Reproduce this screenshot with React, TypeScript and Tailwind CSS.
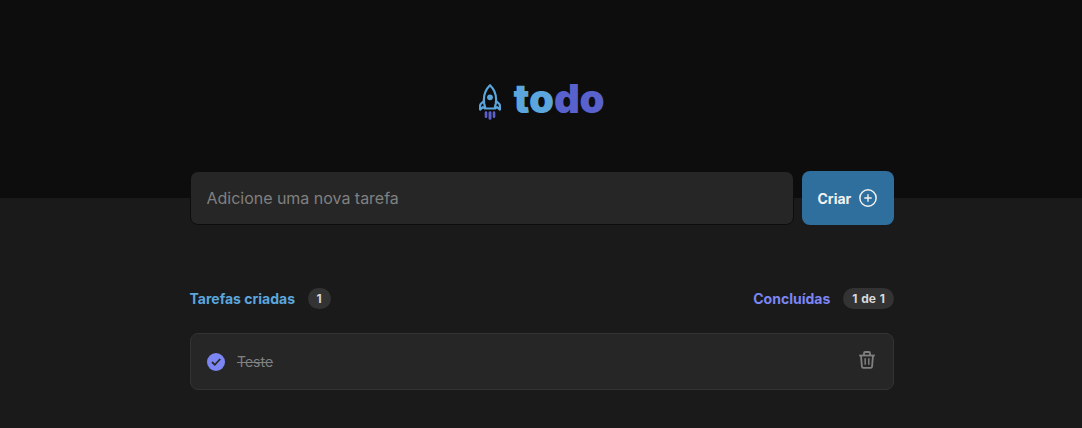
function Rocket() {
  return (
    <svg width="22" height="36" viewBox="0 0 22 36" fill="none" className="shrink-0">
      <g stroke="#5BA6DC" strokeWidth="2.2" strokeLinejoin="round">
        <path d="M6.4 24.5L5.2 19.5C4.2 13 6 6 11 1.2C16 6 17.8 13 16.8 19.5L15.6 24.5Z" />
        <path d="M5 17L1.9 19.8C1.3 20.4 1.1 21 1.1 22V25.6L4 23.2L6.4 24.5" />
        <path d="M17 17L20.1 19.8C20.7 20.4 20.9 21 20.9 22V25.6L18 23.2L15.6 24.5" />
      </g>
      <circle cx="11" cy="13.3" r="2.9" fill="#5BA6DC" />
      <g stroke="#5E60CE" strokeLinecap="round">
        <path d="M7 28.6V32.8M15 28.6V32.8" strokeWidth="2.6" />
        <path d="M11 28.8V34.4" strokeWidth="2.9" />
      </g>
    </svg>
  );
}

function PlusCircle() {
  return (
    <svg width="18" height="18" viewBox="0 0 18 18" fill="none" stroke="#F2F2F2">
      <circle cx="9" cy="9" r="8.15" strokeWidth="1.5" />
      <path d="M9 5.3V12.7M5.3 9H12.7" strokeWidth="1.4" />
    </svg>
  );
}

function CheckBadge() {
  return (
    <svg width="18" height="18" viewBox="0 0 18 18" fill="none">
      <circle cx="9" cy="9" r="9" fill="#7C86F2" />
      <path d="M5 9L7.8 11.8L13.2 6" stroke="#262626" strokeWidth="1.8" />
    </svg>
  );
}

function Trash() {
  return (
    <svg width="16" height="18" viewBox="0 0 16 18" fill="none" stroke="#808080" strokeWidth="1.8">
      <path d="M0.2 4.5H15.8" />
      <path d="M5 4V2.2C5 1.4 5.4 1 6.2 1H9.8C10.6 1 11 1.4 11 2.2V4" />
      <path d="M2 4.5L2.9 15.4C3 16.4 3.5 16.9 4.4 16.9H11.6C12.5 16.9 13 16.4 13.1 15.4L14 4.5" />
      <path d="M6.2 7.2V13.8M9.8 7.2V13.8" strokeWidth="1.5" />
    </svg>
  );
}

export default function App() {
  return (
    <div className="flex h-[428px] flex-col overflow-hidden bg-[#1a1a1a] font-['Inter',sans-serif]">
      <header className="flex h-[198px] shrink-0 justify-center bg-[#0d0d0d] pt-[75px] pl-0.5">
        <h1 className="flex h-12 items-start gap-3 text-[40px] leading-[48px] font-black tracking-[-0.1px]">
          <span className="flex pt-[9px]">
            <Rocket />
          </span>
          <span className="text-[#5ba6dc]">
            to<span className="text-[#5961cc]">do</span>
          </span>
        </h1>
      </header>

      <main className="-mt-[27px] ml-[190px] w-[704px]">
        <form className="flex h-[54px] gap-2" onSubmit={(e) => e.preventDefault()}>
          <input
            aria-label="Nova tarefa"
            placeholder="Adicione uma nova tarefa"
            className="min-w-0 flex-1 rounded-lg border border-[#0d0d0d] bg-[#262626] pr-4 pl-[15.5px] text-base tracking-[-0.02px] text-[#f2f2f2] outline-none placeholder:text-[#808080]"
          />
          <button className="flex w-[92px] items-center gap-[7.5px] rounded-lg bg-[#2f6f9e] pt-px pl-[15.5px] text-sm font-bold text-[#f2f2f2]">
            Criar
            <span className="-mt-px">
              <PlusCircle />
            </span>
          </button>
        </form>

        <section className="mt-[63px]">
          <div className="-ml-[0.5px] flex h-[21px] items-center justify-between text-sm font-bold">
            <div className="flex items-center gap-[12.5px] text-[#5ba6dc]">
              Tarefas criadas
              <span className="flex h-[21px] items-center rounded-full bg-[#333333] px-[9px] text-xs text-[#d9d9d9]">1</span>
            </div>
            <div className="flex items-center gap-[13px] text-[#7c86f2]">
              Concluídas
              <span className="flex h-[21px] items-center rounded-full bg-[#333333] px-[9px] text-xs text-[#d9d9d9] [word-spacing:1px]">1 de 1</span>
            </div>
          </div>

          <div className="mt-6 flex h-[57px] items-center rounded-lg border border-[#333333] bg-[#262626] pr-[18px] pl-4">
            <CheckBadge />
            <p className="ml-3 flex-1 text-sm text-[#808080] line-through">Teste</p>
            <span className="mb-1">
              <Trash />
            </span>
          </div>
        </section>
      </main>
    </div>
  );
}
